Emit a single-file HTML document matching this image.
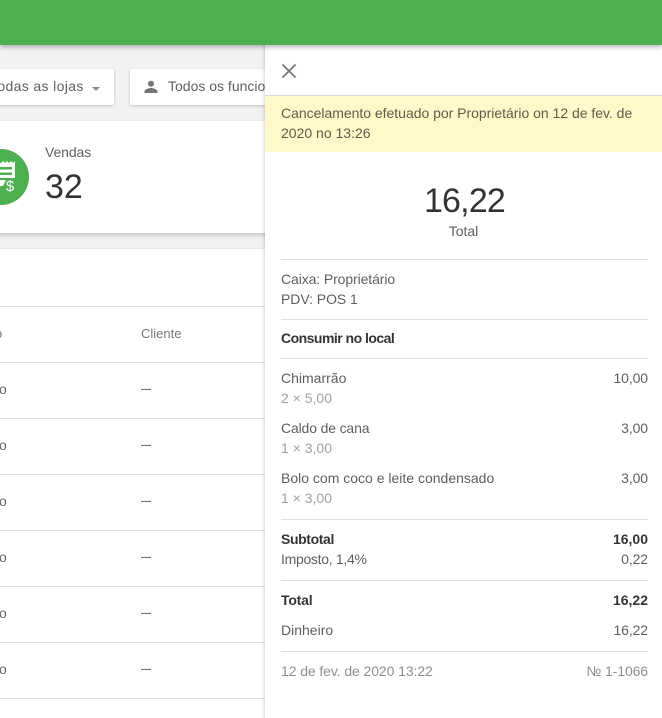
<!DOCTYPE html>
<html lang="pt"><head><meta charset="utf-8"><title>Recibo</title>
<style>
html,body{margin:0;padding:0;overflow:hidden;width:662px;height:718px}
body{position:relative;background:#f2f2f2;font-family:"Liberation Sans",sans-serif;font-size:14px;color:rgba(0,0,0,.87)}
#root{position:absolute;left:0;top:0;width:662px;height:718px;overflow:hidden}
.a{position:absolute;white-space:nowrap;line-height:20px}
.r{position:absolute;right:14px;white-space:nowrap;line-height:20px;text-align:right}
.l{position:absolute;height:1px;background:#e0e0e0}
.d{color:rgba(0,0,0,.64)}
.g{color:rgba(0,0,0,.38)}
.b{font-weight:bold;color:rgba(0,0,0,.8)}
.card{position:absolute;background:#fff;box-shadow:0 1px 3px rgba(0,0,0,.2);border-radius:2px}
.o{left:-1px;color:rgba(0,0,0,.62)}
.m{left:141px;font-size:10px;color:rgba(0,0,0,.87)}
</style></head><body><div id="root">
<div style="position:absolute;left:0;top:0;width:662px;height:45px;background:#4caf50;box-shadow:0 2px 5px rgba(0,0,0,.3);z-index:5"></div>

<div class="card" style="left:-10px;top:69px;width:124px;height:36px"></div>
<div class="a d" style="left:-10px;top:76px;letter-spacing:.36px">Todas as lojas</div>
<div style="position:absolute;left:92px;top:87px;border-left:4px solid transparent;border-right:4px solid transparent;border-top:4px solid rgba(0,0,0,.45)"></div>
<div class="card" style="left:130px;top:69px;width:160px;height:36px"></div>
<svg style="position:absolute;left:143px;top:79px" width="16" height="16" viewBox="0 0 16 16"><circle cx="8" cy="4.800" r="3" fill="#757575"/><path d="M1.500 14v-1.600c0-2.200 4.300-3.400 6.500-3.400s6.500 1.200 6.500 3.400V14z" fill="#757575"/></svg>
<div class="a d" style="left:168px;top:76px">Todos os funcionários</div>

<div class="card" style="left:-10px;top:121px;width:285px;height:112px;box-shadow:0 2px 4px rgba(0,0,0,.2)"></div>
<svg style="position:absolute;left:0;top:149px" width="29" height="56" viewBox="0 0 29 56"><circle cx="1" cy="28" r="28" fill="#4caf50"/><path d="M0 14h1l2-2 2 2 2-2 2 2 2-2 2 2 2-2v17H0z" fill="#fff"/><path d="M0 18h12v2.500H0zM0 23.500h12V26H0z" fill="#4caf50"/><path d="M0 31h6l-3 6H0z" fill="#fff"/></svg>
<div class="a" style="left:3px;top:177px;width:14px;color:#fff;font-size:15px;text-align:center">$</div>
<div class="a d" style="left:45px;top:142px;letter-spacing:-.1px">Vendas</div>
<div class="a" style="left:45px;top:167px;font-size:34px;line-height:40px;color:rgba(0,0,0,.8)">32</div>

<div class="card" style="left:-10px;top:249px;width:285px;height:480px"></div>
<div class="l" style="left:0;top:306px;width:265px"></div>
<div class="l" style="left:0;top:362px;width:265px"></div>
<div class="l" style="left:0;top:418px;width:265px"></div>
<div class="l" style="left:0;top:474px;width:265px"></div>
<div class="l" style="left:0;top:530px;width:265px"></div>
<div class="l" style="left:0;top:586px;width:265px"></div>
<div class="l" style="left:0;top:642px;width:265px"></div>
<div class="l" style="left:0;top:698px;width:265px"></div>
<div class="a" style="left:-5px;top:324px;font-size:13px;color:rgba(0,0,0,.54)">o</div>
<div class="a" style="left:141px;top:324px;font-size:13px;color:rgba(0,0,0,.54)">Cliente</div>
<div class="a o" style="top:379px">o</div><div class="a m" style="top:380px">—</div>
<div class="a o" style="top:435px">o</div><div class="a m" style="top:436px">—</div>
<div class="a o" style="top:491px">o</div><div class="a m" style="top:492px">—</div>
<div class="a o" style="top:547px">o</div><div class="a m" style="top:548px">—</div>
<div class="a o" style="top:603px">o</div><div class="a m" style="top:604px">—</div>
<div class="a o" style="top:659px">o</div><div class="a m" style="top:660px">—</div>

<div style="position:absolute;left:265px;top:40px;width:397px;height:700px;background:#fff;box-shadow:0 0 4px rgba(0,0,0,.25);z-index:3"></div>
<div style="position:absolute;left:0;top:0;width:662px;height:718px;z-index:4">
<svg style="position:absolute;left:281px;top:63px" width="16" height="16" viewBox="0 0 16 16"><path d="M1.500 1.500l13 13M14.500 1.500l-13 13" stroke="#757575" stroke-width="1.700" fill="none"/></svg>
<div class="l" style="left:265px;top:95px;width:397px;background:#d8d8d8"></div>
<div style="position:absolute;left:265px;top:96px;width:397px;height:56px;background:#fff8c9"></div>
<div class="a d" style="left:281px;top:103px;letter-spacing:-.02px">Cancelamento efetuado por Proprietário on 12 de fev. de</div>
<div class="a d" style="left:281px;top:123px">2020 no 13:26</div>
<div class="a" style="left:266px;width:397px;text-align:center;top:181px;font-size:34px;line-height:40px;letter-spacing:-.8px;color:rgba(0,0,0,.8)">16,22</div>
<div class="a d" style="left:265px;width:397px;text-align:center;top:221px">Total</div>
<div class="l" style="left:281px;top:259px;width:367px"></div>
<div class="a d" style="left:281px;top:269px;letter-spacing:-.1px">Caixa: Proprietário</div>
<div class="a d" style="left:281px;top:289px;letter-spacing:-.05px">PDV: POS 1</div>
<div class="l" style="left:281px;top:319px;width:367px"></div>
<div class="a b" style="left:281px;top:328px;letter-spacing:-.52px">Consumir no local</div>
<div class="l" style="left:281px;top:358px;width:367px"></div>
<div class="a d" style="left:281px;top:368px">Chimarrão</div><div class="r d" style="top:368px;letter-spacing:-.1px">10,00</div>
<div class="a g" style="left:281px;top:388px">2 × 5,00</div>
<div class="a d" style="left:281px;top:418px;letter-spacing:-.15px">Caldo de cana</div><div class="r d" style="top:418px;letter-spacing:-.1px">3,00</div>
<div class="a g" style="left:281px;top:438px">1 × 3,00</div>
<div class="a d" style="left:281px;top:468px">Bolo com coco e leite condensado</div><div class="r d" style="top:468px;letter-spacing:-.1px">3,00</div>
<div class="a g" style="left:281px;top:488px">1 × 3,00</div>
<div class="l" style="left:281px;top:519px;width:367px"></div>
<div class="a b" style="left:281px;top:529px;letter-spacing:-.38px">Subtotal</div><div class="r b" style="top:529px">16,00</div>
<div class="a d" style="left:281px;top:549px;letter-spacing:-.3px">Imposto, 1,4%</div><div class="r d" style="top:549px;letter-spacing:-.1px">0,22</div>
<div class="l" style="left:281px;top:580px;width:367px"></div>
<div class="a b" style="left:281px;top:590px;letter-spacing:-.2px">Total</div><div class="r b" style="top:590px">16,22</div>
<div class="a d" style="left:281px;top:620px">Dinheiro</div><div class="r d" style="top:620px;letter-spacing:-.1px">16,22</div>
<div class="l" style="left:281px;top:651px;width:367px"></div>
<div class="a" style="left:281px;top:661px;color:rgba(0,0,0,.45);letter-spacing:-.09px">12 de fev. de 2020 13:22</div><div class="r" style="top:661px;color:rgba(0,0,0,.45);letter-spacing:-.1px">№ 1-1066</div>
</div>
</div></body></html>
